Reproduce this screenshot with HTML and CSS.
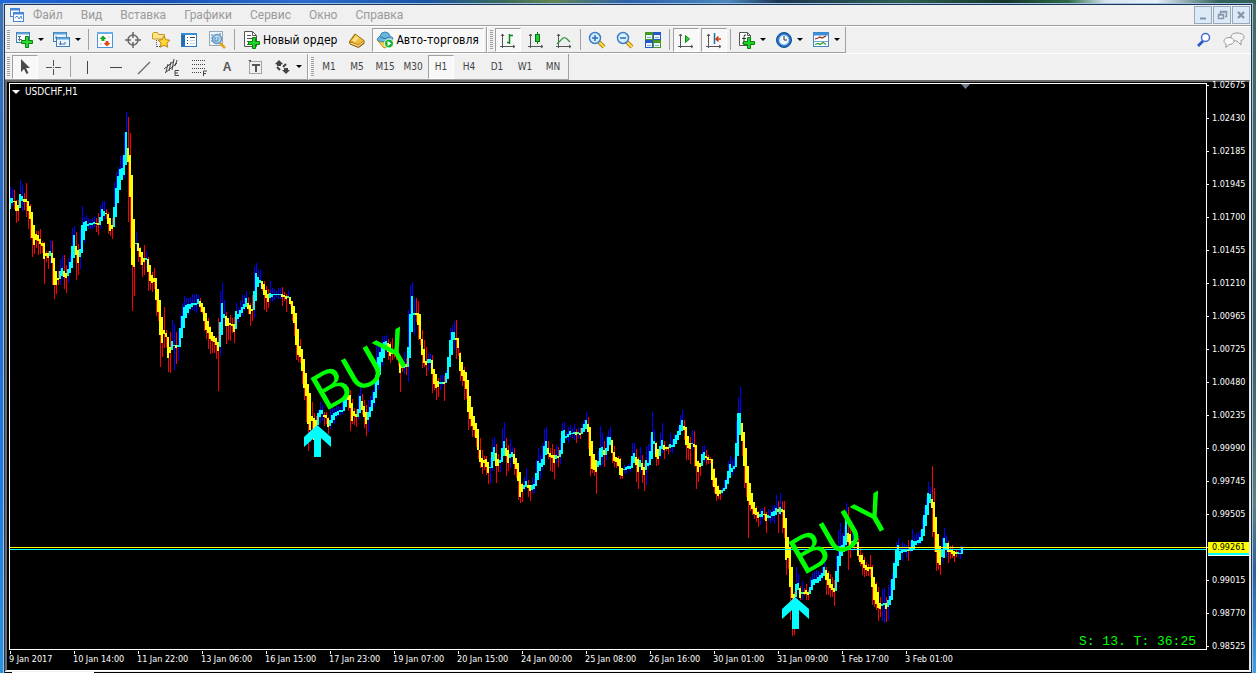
FILE: index.html
```html
<!DOCTYPE html>
<html lang="ru">
<head>
<meta charset="utf-8">
<title>USDCHF,H1</title>
<link rel="stylesheet" href="styles.css">
</head>
<body>
<div class="window">
  <header class="menubar">
    <svg class="app-icon" width="16" height="16" viewBox="0 0 16 16"><g fill="#fff" stroke="#4a86d8"><rect x="1.500" y="1.500" width="9" height="8"/><rect x="4.500" y="5.500" width="10" height="9"/></g><path d="M1 2.500h10M4 6.500h11" stroke="#4a86d8" stroke-width="2"/><path d="M6 11l2-2 2 3 2-3 1 3" fill="none" stroke="#4a86d8"/></svg>
    <nav class="menu">
      <button>Файл</button><button>Вид</button><button>Вставка</button><button>Графики</button><button>Сервис</button><button>Окно</button><button>Справка</button>
    </nav>
    <div class="controls">
      <button aria-label="Свернуть"><svg width="16" height="16"><path d="M5 11.500h6" stroke="#7f93a8" stroke-width="2"/></svg></button>
      <button aria-label="Восстановить"><svg width="16" height="16"><path d="M6.500 7V4.500h6v5H11M6 5h7M4.500 7.500h5v4h-5zM4 8h6" fill="none" stroke="#8698aa" stroke-width="1.500"/></svg></button>
      <button aria-label="Закрыть"><svg width="16" height="16"><path d="M5 5l6 6M11 5l-6 6" stroke="#8295a8" stroke-width="2.200"/></svg></button>
    </div>
  </header>

  <div class="row">
    <div class="group">
      <span class="grip"></span>
      <button class="drop" aria-label="Новый график"><svg width="18" height="18"><rect x=".5" y="1.500" width="13" height="10" fill="#fff" stroke="#3f7fb5"/><path d="M1 2.500h12" stroke="#5fa4dc" stroke-width="2"/><path d="M3.500 5v5M2 8.500h4M2 5.500h3" stroke="#56738f"/><path d="M9.500 5.500h3v4h4v3h-4v4h-3v-4h-4v-3h4z" fill="#2bd934" stroke="#06830d"/></svg><i class="caret"></i></button>
      <button class="drop" aria-label="Профили"><svg width="18" height="18"><rect x=".5" y="1.500" width="13" height="9" fill="#e8f3fc" stroke="#3f7fb5"/><path d="M1 2.500h12" stroke="#5fa4dc" stroke-width="2"/><rect x="3.500" y="6.500" width="13" height="9" fill="#e8f3fc" stroke="#3f7fb5"/><path d="M4 7.500h12" stroke="#5fa4dc" stroke-width="2"/><path d="M3 5v3M6 13h6M7.500 10v4M12 11v2" stroke="#56738f"/></svg><i class="caret"></i></button>
      <span class="sep"></span>
      <button class="tool" aria-label="Обзор рынка"><svg width="18" height="18"><rect x="1.500" y="1.500" width="15" height="15" fill="#fff" stroke="#4d94d6"/><path d="M1 2h16" stroke="#69aee8" stroke-width="2"/><path d="M3.500 8L7 4.500 10.500 8H8.500v2h-3V8z" fill="#17a81f"/><path d="M7.500 12h2v-2h3v2h2L11 15.500z" fill="#dd4a17"/><path d="M4 13h2M12 6h2" stroke="#bbb"/></svg></button>
      <button class="tool" aria-label="Окно данных"><svg width="18" height="18"><circle cx="9" cy="9" r="5" fill="none" stroke="#666" stroke-width="1.500"/><path d="M9 1v6M9 11v6M1 9h6M11 9h6" stroke="#666" stroke-width="1.500"/></svg></button>
      <button class="tool" aria-label="Навигатор"><svg width="18" height="18"><path d="M.5 8V2.500l1-1h4l1 2h6V8z" fill="#ffe384" stroke="#c59a24"/><path d="M4.500 9v7M5 15.500h4" stroke="#555" stroke-dasharray="1 1"/><path d="M12 5l1.900 3.700 4 .5-3 2.900.8 4.100L12 14.300l-3.700 1.900.8-4.100-3-2.900 4-.5z" fill="#ffd735" stroke="#b98510"/></svg></button>
      <button class="tool" aria-label="Терминал"><svg width="18" height="18"><rect x="1.500" y="2.500" width="15" height="13" fill="#fff" stroke="#2f78bd"/><path d="M1 3h16" stroke="#3c8ad0" stroke-width="2"/><path d="M3.500 4v11" stroke="#246bb2" stroke-width="3"/><path d="M7 6.500h1M10 6.500h5M7 9.500h1M7 12.500h1" stroke="#345"/><path d="M10 9.500h5M10 12.500h5" stroke="#c4d6e8"/></svg></button>
      <button class="tool" aria-label="Тестер стратегий"><svg width="18" height="18"><rect x="1.500" y=".5" width="13" height="14" fill="#eef4f8" stroke="#98a8b3"/><path d="M4 3v9M12 2v5" stroke="#52799e" stroke-dasharray="2 1"/><circle cx="9" cy="8" r="4.500" fill="#b5daf2" stroke="#5e96c6" stroke-width="1.500"/><path d="M7 6v4h3V6" fill="none" stroke="#5487b5"/><path d="M12 12l5 5" stroke="#e0a522" stroke-width="2.500"/></svg></button>
      <span class="sep"></span>
      <button class="wide"><svg width="18" height="18"><path d="M1.500.5h8l4 4v11h-12z" fill="#fff" stroke="#555"/><path d="M9.500.5v4h4M4 4.500h4M4 7.500h7M4 10.500h4M4 13.500h2" fill="none" stroke="#555"/><path d="M9.500 6.500h3v4h4v3h-4v4h-3v-4h-4v-3h4z" fill="#1fd326" stroke="#07850c"/></svg>Новый ордер</button>
      <button class="tool" aria-label="Редактор"><svg width="18" height="18"><path d="M1.500 10.500L7 3l9 6.500v3L10.500 16.500 2 13z" fill="#c4820c" stroke="#8b5a08"/><path d="M2.500 10L7.500 3.500l8 6-5 4z" fill="#efbd3c"/><path d="M4 9.500l4-4.500 3 2-4 4.500z" fill="#fbe08a"/><path d="M2.500 12l8 3L15.500 11" fill="none" stroke="#fff1c0"/></svg></button>
      <button class="wide pressed"><svg width="18" height="18"><path d="M1 9l7 8 7-2 1-6z" fill="#f4cf4d" stroke="#c6981e"/><path d="M4 5q1-4 5-4t5 4l3 2q-1 4-8 4T1 8z" fill="#69b5dc" stroke="#3a86b2"/><path d="M4 6q5 3 10 0" fill="none" stroke="#2c79a8"/><circle cx="13" cy="12.500" r="4.500" fill="#14b32a" stroke="#fff"/><path d="M11.500 10v5l4-2.500z" fill="#fff"/></svg>Авто-торговля</button>
    </div>
    <div class="group second">
      <span class="grip"></span>
      <button class="tool pressed" aria-label="Бары"><svg width="18" height="18"><path d="M3.500 3v14M1 15.500h15M2 5l1.500-2L5 5M14 14l2 1.500-2 1.500" fill="none" stroke="#555"/><path d="M10.500 3v10M8 11.500h2.500M11 4.500h3" stroke="#0a8a19" stroke-width="1.500"/></svg></button>
      <button class="tool" aria-label="Свечи"><svg width="18" height="18"><path d="M3.500 3v14M1 15.500h15M2 5l1.500-2L5 5M14 14l2 1.500-2 1.500" fill="none" stroke="#555"/><path d="M10.500 1v12" stroke="#087810"/><rect x="8.500" y="3.500" width="4" height="7" fill="#21ce35" stroke="#087810"/></svg></button>
      <button class="tool" aria-label="Линия"><svg width="18" height="18"><path d="M3.500 3v14M1 15.500h15M2 5l1.500-2L5 5M14 14l2 1.500-2 1.500" fill="none" stroke="#555"/><path d="M2 13l6-6q2-1 4 1l3 3" fill="none" stroke="#2e9b3b" stroke-width="1.300"/></svg></button>
      <span class="sep"></span>
      <button class="tool" aria-label="Увеличить"><svg width="18" height="18"><path d="M11 11l5 5" stroke="#b8860b" stroke-width="4"/><path d="M11 11l5 5" stroke="#ffdc55" stroke-width="2"/><circle cx="7" cy="7" r="5.500" fill="#d7efff" stroke="#3d7fc4" stroke-width="1.500"/><path d="M4 7h6M7 4v6" stroke="#276fb8" stroke-width="1.500"/></svg></button>
      <button class="tool" aria-label="Уменьшить"><svg width="18" height="18"><path d="M11 11l5 5" stroke="#b8860b" stroke-width="4"/><path d="M11 11l5 5" stroke="#ffdc55" stroke-width="2"/><circle cx="7" cy="7" r="5.500" fill="#d7efff" stroke="#3d7fc4" stroke-width="1.500"/><path d="M4 7h6" stroke="#276fb8" stroke-width="1.500"/></svg></button>
      <button class="tool" aria-label="Окна плиткой"><svg width="18" height="18"><path d="M1 1h8v8H1zM9 9h8v8H9z" fill="#46991e"/><path d="M9 1h8v8H9zM1 9h8v8H1z" fill="#2459c8"/><path d="M2 4h6v4H2zM10 4h6v4h-6zM2 12h6v4H2zM10 12h6v4h-6z" fill="#eef5ff"/><path d="M3 6.500h4M11 6.500h4M3 14.500h4M11 14.500h4" stroke="#84a8cf"/></svg></button>
      <span class="sep"></span>
      <button class="tool pressed" aria-label="Автопрокрутка"><svg width="18" height="18"><path d="M3.500 3v14M1 15.500h15M2 5l1.500-2L5 5M14 14l2 1.500-2 1.500" fill="none" stroke="#555"/><path d="M8.500 4.500v7l4-3.500z" fill="#2ccf40" stroke="#0b8a18"/></svg></button>
      <button class="tool pressed" aria-label="Сдвиг графика"><svg width="18" height="18"><path d="M3.500 3v14M1 15.500h15M2 5l1.500-2L5 5M14 14l2 1.500-2 1.500" fill="none" stroke="#555"/><path d="M9.500 2v11" stroke="#1f6fa8" stroke-width="1.500"/><path d="M11 8h5M13.500 5.500L11 8l2.500 2.500" fill="none" stroke="#c9400d" stroke-width="1.500"/></svg></button>
      <span class="sep"></span>
      <button class="drop" aria-label="Индикаторы"><svg width="18" height="18"><path d="M1.500 1.500h8l3 3v10h-11z" fill="#fff" stroke="#555"/><path d="M9.500 1.500v3h3" fill="none" stroke="#555"/><path d="M8 4q-2-1-2 2v5q0 2-2 1M4 7.500h4" fill="none" stroke="#333"/><path d="M9.500 6.500h3v4h4v3h-4v4h-3v-4h-4v-3h4z" fill="#1fd326" stroke="#07850c"/></svg><i class="caret"></i></button>
      <button class="drop" aria-label="Периоды"><svg width="18" height="18"><circle cx="9" cy="9" r="7.500" fill="#1d6fc4" stroke="#0c4e99"/><circle cx="9" cy="9" r="5" fill="#f3f8fc" stroke="#84bdee"/><path d="M9 5v4h3" fill="none" stroke="#333"/></svg><i class="caret"></i></button>
      <button class="drop" aria-label="Шаблоны"><svg width="18" height="18"><rect x="1.500" y="1.500" width="15" height="14" fill="#fff" stroke="#3f86c8"/><path d="M1 3h16" stroke="#3f8fd8" stroke-width="3"/><path d="M2 10.500h14" stroke="#79a9d3"/><path d="M3 8l3-1 2-1 2 1 4-2" fill="none" stroke="#932c13" stroke-width="1.300"/><path d="M3 13.500l3-1 2 1 3-2 3 2" fill="none" stroke="#279b31" stroke-width="1.300"/></svg><i class="caret"></i></button>
    </div>
    <div class="right">
      <button class="tool" aria-label="Поиск"><svg width="18" height="18"><path d="M8 10l-5 5" stroke="#2c58c8" stroke-width="2.800"/><circle cx="10.500" cy="6.500" r="4" fill="#fff" stroke="#3f6bd8" stroke-width="1.500"/></svg></button>
      <button class="chat" aria-label="Чат"><svg width="22" height="18"><path d="M14 2c4 0 7 1.500 7 4 0 2-1 3-3 3.500V14l-4-4c-4 0-6-1.500-6-4s2-4 6-4z" fill="#f4f4f6" stroke="#999"/><path d="M6 6.500c3 0 5 1.500 5 3.500s-2 3.500-5 3.500l-3 3v-3.500C1.500 12.500 1 11 1 10c0-2 2-3.500 5-3.500z" fill="#fafafc" stroke="#999"/></svg></button>
    </div>
  </div>

  <div class="row">
    <div class="group">
      <span class="grip"></span>
      <button class="tool pressed" aria-label="Курсор"><svg width="18" height="18"><path d="M5 1v13l3-3 2.500 5 2-1L10 10h4z" fill="#4a4a4a"/></svg></button>
      <button class="tool" aria-label="Перекрестие"><svg width="18" height="18"><path d="M9.500 2v6M9.500 11v6M2 9.500h6M11 9.500h6M9 9.500h1" stroke="#4f4f4f"/></svg></button>
      <span class="sep"></span>
      <button class="tool" aria-label="Вертикальная линия"><svg width="18" height="18"><path d="M9.500 3v13" stroke="#444"/></svg></button>
      <button class="tool" aria-label="Горизонтальная линия"><svg width="18" height="18"><path d="M4 9.500h12" stroke="#444"/></svg></button>
      <button class="tool" aria-label="Трендовая линия"><svg width="18" height="18"><path d="M4 16L16 4" stroke="#666" stroke-width="1.200"/></svg></button>
      <button class="tool" aria-label="Канал"><svg width="18" height="18"><path d="M2 11L12 3M3 15L15 5M6 6l-2 8M9 4l-2 9M12 1l-2 11M15 2l-2 6" stroke="#444"/><path d="M17 12.500h-4v5h4M13 15h3" fill="none" stroke="#444"/></svg></button>
      <button class="tool" aria-label="Фибоначчи"><svg width="18" height="18"><path d="M2 2.500h14M2 6.500h14M2 10.500h14M2 14.500h9" stroke="#444" stroke-dasharray="1 1"/><path d="M13.500 18v-5H17M13 15.500h3" fill="none" stroke="#444"/></svg></button>
      <button class="tool letter">A</button>
      <button class="tool" aria-label="Текстовая метка"><svg width="18" height="18"><rect x="3.500" y="3.500" width="12" height="12" fill="none" stroke="#555" stroke-dasharray="1 1"/><path d="M6 7h8M10 6v8" stroke="#555" stroke-width="2"/><path d="M2 2h3v2z" fill="#444"/></svg></button>
      <button class="drop" aria-label="Стрелки"><svg width="18" height="18"><path d="M5 2l4 4-2 .5V8H3V6.500L1 6z" fill="#444"/><path d="M12 16l-4-4h2v-2h4v2h2z" fill="#444"/><path d="M3 9l3 3M9 9l3-3" stroke="#444" stroke-width="2"/></svg><i class="caret"></i></button>
    </div>
    <div class="group frames">
      <span class="grip"></span>
      <button class="tool">M1</button><button class="tool">M5</button><button class="tool">M15</button><button class="tool">M30</button><button class="tool pressed">H1</button><button class="tool">H4</button><button class="tool">D1</button><button class="tool">W1</button><button class="tool">MN</button>
    </div>
  </div>

  <main class="chart">
    <section class="plot">
      <svg class="canvas" id="canvas" width="100%" height="100%" role="img" aria-label="USDCHF, H1"></svg>
      <div class="symbol"><i class="caret"></i>USDCHF,H1</div>
      <div class="timer">S: 13. T: 36:25</div>
    </section>
    <ol class="prices">
      <li>1.02675</li><li>1.02430</li><li>1.02185</li><li>1.01945</li><li>1.01700</li><li>1.01455</li><li>1.01210</li><li>1.00965</li><li>1.00725</li><li>1.00480</li><li>1.00235</li><li>0.99990</li><li>0.99745</li><li>0.99505</li><li class="current"><b>0.99261</b></li><li>0.99015</li><li>0.98770</li><li>0.98525</li>
    </ol>
    <ol class="dates">
      <li>9 Jan 2017</li><li>10 Jan 14:00</li><li>11 Jan 22:00</li><li>13 Jan 06:00</li><li>16 Jan 15:00</li><li>17 Jan 23:00</li><li>19 Jan 07:00</li><li>20 Jan 15:00</li><li>24 Jan 00:00</li><li>25 Jan 08:00</li><li>26 Jan 16:00</li><li>30 Jan 01:00</li><li>31 Jan 09:00</li><li>1 Feb 17:00</li><li>3 Feb 01:00</li>
    </ol>
  </main>
  <footer class="tabs"><span></span></footer>
</div>
<script src="chart.js"></script>
</body>
</html>
```

FILE: styles.css
```css
* { box-sizing: border-box; }
body {
  margin: 0;
  height: 100vh;
  padding: 4px 4px 0 4px;
  overflow: hidden;
  font-family: "DejaVu Sans Condensed", "Noto Sans", sans-serif;
  background:
    linear-gradient(90deg, #2368d8 0, #164fb5 12%, #2c6ccf 24%, #1a55a4 34%, #3b6a58 40%, #62864f 44%, #2b62ac 50%, #4a87bd 58%, #1c3550 62%, #2e5f50 72%, #15352b 80%, #2c6a44 85%, #d5e4ec 88%, #e9f1fa 92%, #35615c 97%) top / 100% 4px no-repeat,
    linear-gradient(180deg, #3f72b0 0, #2368cf 40%, #1c7fe0 75%, #2a93dd) left / 5px 100% no-repeat,
    linear-gradient(180deg, #4b6b66 0, #3c5d5c 50%, #5f827c 75%, #2f5f9c 85%, #39a2ec) right / 5px 100% no-repeat,
    #1a3458;
}
button { border: 0; background: none; padding: 0; margin: 0; font: inherit; color: inherit; }
svg { display: block; flex: none; }
ol { list-style: none; margin: 0; padding: 0; }

.window {
  height: 100%;
  display: flex;
  flex-direction: column;
  background: #f0f0f0;
  border: 1px solid #1b3557;
  border-bottom: 0;
  outline: 1px solid #9fc0e0;
}
.menubar {
  display: flex;
  align-items: center;
  height: 21px;
  flex: none;
  padding: 0 1px 0 4px;
  border-bottom: 1px solid #a0a0a0;
}
.menu { display: flex; gap: 18px; margin-left: 8px; font: 12px/16px Roboto, "Noto Sans", sans-serif; color: #9a9a9a; }
.controls { display: flex; gap: 1px; margin-left: auto; }
.controls button { width: 18px; height: 18px; border: 1px solid #98a9bc; background: #dce9f6; }

.row { display: flex; height: 27px; flex: none; border-top: 1px solid #fff; }
.group {
  display: flex;
  align-items: center;
  border-right: 1px solid #a0a0a0;
  border-bottom: 1px solid #a0a0a0;
  padding-right: 1px;
}
.second, .frames { border-left: 1px solid #fff; }
.grip {
  width: 3px;
  height: 20px;
  margin: 0 1px 0 2px;
  background: repeating-linear-gradient(180deg, #a0a0a0 0 1px, #f0f0f0 1px 2px);
}
.sep { width: 1px; height: 21px; margin: 0 2px 0 3px; background: #a0a0a0; }
.second .sep { margin-left: 2px; }
.tool, .drop, .wide, .chat { display: flex; align-items: center; height: 24px; flex: none; }
.tool { width: 28px; justify-content: center; }
.tool.pressed { width: 26px; margin: 0 1px; }
.drop { width: 37px; padding-left: 5px; gap: 4px; }
.wide { gap: 2px; padding: 0 6px; font: 12px/16px "DejaVu Sans Condensed", sans-serif; color: #000; }
.wide.pressed { padding: 0 4px 0 3px; margin: 0 1px; }
.pressed {
  background: #f8f8f8;
  border: 1px solid #a0a0a0;
  border-right-color: #fff;
  border-bottom-color: #fff;
}
.caret { border: 3px solid transparent; border-top-color: #000; border-bottom: 0; }
.right { display: flex; align-items: center; margin-left: auto; padding-right: 6px; gap: 5px; }
.letter { font: bold 12px/16px "Liberation Sans", sans-serif; color: #555; }
.frames { font-size: 10px; color: #444; }

.chart {
  flex: 1;
  min-height: 0;
  margin-right: 1px;
  display: grid;
  grid-template-columns: 1fr 42px;
  grid-template-rows: 1fr 20px;
  background: #000;
  color: #fff;
  border: 2px solid #696969;
  border-right: 1px solid #e3e3e3;
  border-bottom: 1px solid #fff;
  padding: 1px 0 0 2px;
  font-size: 9px;
  line-height: 11px;
}
.plot { position: relative; min-width: 0; min-height: 0; border: 1px solid #fff; }
.canvas { position: absolute; inset: 0; }
.symbol { position: absolute; left: 2px; top: 2px; display: flex; align-items: center; gap: 5px; font-size: 10px; }
.symbol .caret { border-width: 4px; border-bottom: 0; border-top-color: #fff; }
.timer { position: absolute; right: 10px; bottom: 0; font: 13px/15px "Liberation Mono", monospace; color: #0f0; }
.prices { min-height: 0; margin-top: -3px; }
.prices li { display: flex; align-items: center; gap: 3px; height: 11px; margin-bottom: 22px; }
.prices li::before { content: ""; width: 2px; height: 1px; background: #fff; }
.prices .current { gap: 0; }
.prices .current::before { width: 1px; }
.prices b { flex: 1; padding-left: 4px; font-weight: normal; background: #ff0; color: #000; box-shadow: 0 2px #0ff, 0 3px #fff; }
.dates { grid-column: 1 / -1; display: flex; }
.dates li { width: 64px; flex: none; padding-top: 1px; white-space: nowrap; }
.dates li::before { content: ""; display: block; width: 1px; height: 3px; margin-left: 1px; background: #fff; }
.tabs { flex: none; height: 2px; background: #000; border-top: 1px solid #f0f0f0; padding-left: 7px; }
.tabs span { display: block; width: 82px; height: 1px; background: #fff; }
```

FILE: chart.js
```js
// Each row: x of its first candle, then candles two pixels apart.
// u = rising, d = falling; values: high, body top, body bottom, low.
const rows = [
  [10, "u187,198,209,209 u189,198,203,206 d190,201,202,209 d200,201,211,223 d200,205,211,221 u180,194,208,208 u185,196,201,211 d193,199,202,210 d183,199,202,217 d201,201,211,229 d204,206,219,239 d212,212,238,257 d225,225,245,254 d231,234,240,248 d231,235,241,255"],
  [40, "d229,239,244,254 d241,243,246,253 d242,243,259,284 d251,253,256,262 d251,253,258,269 u240,251,256,264 d241,253,263,285 d258,258,285,299 d271,271,285,294 d271,278,280,285 u259,271,279,285 u255,268,276,279 d255,271,277,289 d265,273,278,293 u258,269,276,283"],
  [70, "u255,262,273,273 u228,246,268,268 u226,235,258,258 d232,246,255,280 d244,250,263,275 u230,249,257,269 u206,225,253,253 u217,222,240,243 u215,221,231,231 u219,224,226,229 u219,223,225,229 u218,223,225,229 u216,222,224,227 d218,223,224,232 d213,223,225,235"],
  [100, "u205,217,225,229 u201,209,221,221 u201,211,216,219 d209,213,214,219 d212,214,224,234 d218,218,231,236 d218,225,229,239 u182,207,227,227 u172,188,217,217 u167,176,203,203 u156,169,190,190 u156,168,180,180 u133,155,175,178 u112,132,165,165 d117,148,162,222"],
  [130, "d133,155,197,248 d175,175,265,311 d219,219,267,296 u232,243,244,251 d243,243,251,262 d247,248,257,265 d252,252,265,277 d245,258,262,275 u251,258,260,270 d257,259,272,291 d265,265,281,290 d272,275,283,292 d268,278,282,289 d278,278,300,316 d289,289,312,321"],
  [160, "d300,300,335,367 d317,317,343,357 d307,330,334,348 d330,333,337,347 d337,337,358,372 d332,347,353,373 u320,341,350,350 u324,345,346,370 d332,345,348,364 u330,345,347,361 u315,328,347,347 u303,316,338,338 u296,307,328,328 u298,305,318,318 u298,304,313,315"],
  [190, "u297,304,309,311 u294,303,307,310 u295,303,305,311 u294,303,305,313 u295,299,304,306 d298,301,307,312 d303,303,312,314 d307,307,321,331 d313,313,330,339 d318,321,333,349 d326,327,339,354 d332,332,341,353 d336,336,342,353 d337,338,345,359 d318,342,351,391"],
  [220, "u291,322,347,356 u283,303,335,335 u300,314,318,326 d312,316,326,344 d318,318,326,340 d315,323,325,341 d318,324,326,333 d317,324,332,343 u303,311,329,329 u308,314,319,322 u301,310,317,317 u295,307,313,316 u295,304,309,311 u291,298,307,307 d297,303,309,314"],
  [250, "d303,305,314,326 d295,309,311,321 u266,291,310,318 u263,273,301,301 u270,277,287,287 u270,280,283,289 d281,281,289,291 d281,284,295,310 d286,290,298,312 d289,294,302,308 u281,293,298,302 u288,294,297,302 u289,294,295,300 u291,294,295,298 u288,294,295,299"],
  [280, "u288,294,295,299 d287,294,297,306 d292,295,297,301 d294,296,299,312 u290,296,298,298 d297,297,304,306 d301,301,314,321 d306,306,323,336 d313,313,345,360 d329,329,355,362 d339,346,357,363 d349,349,371,384 d359,359,388,400 d373,373,396,422 d384,384,424,451"],
  [310, "d393,393,430,442 d402,416,421,435 d413,418,440,445 d416,420,432,440 u410,413,425,430 u402,410,417,423 u405,410,414,420 d412,415,417,426 d412,415,418,424 d417,418,427,434 u408,420,426,429 u405,415,423,423 u408,413,420,424 u406,412,416,418 u406,411,415,416"],
  [340, "u407,410,412,415 u402,410,412,414 u395,398,411,411 u384,391,407,407 d387,393,400,411 d390,395,408,431 d399,403,421,424 d408,411,416,425 d409,414,417,427 u394,409,417,420 u387,396,413,413 d394,401,410,415 d400,406,417,428 d405,412,424,436 u400,412,420,432"],
  [370, "u396,407,417,417 u390,400,411,411 u380,392,403,407 u346,375,398,398 u346,357,385,390 u342,352,375,375 u336,345,362,366 u336,342,358,358 u335,341,350,354 d339,343,352,360 d342,344,356,363 d338,351,354,360 d348,352,354,358 d349,353,356,360 d350,354,359,366"],
  [400, "d355,356,373,392 d359,360,368,372 u352,364,368,374 d358,364,367,375 u310,347,367,382 u285,314,358,358 u282,296,332,332 u298,313,315,335 d298,313,315,322 d301,313,325,340 d314,314,339,345 d330,339,355,368 d340,349,363,367 d347,361,365,376 u353,359,363,371"],
  [430, "u354,359,363,368 d355,360,374,393 d369,369,384,390 d374,374,388,400 d378,381,387,397 u375,382,384,390 u375,382,384,386 d376,382,384,401 u370,373,383,383 u357,357,379,379 u328,340,367,367 u325,332,355,355 u321,332,340,350 d320,338,340,359 d338,338,348,356"],
  [460, "d352,353,371,381 d362,362,376,386 d367,370,381,400 d372,372,389,399 d380,380,412,430 d396,396,419,427 d407,407,426,437 d416,416,430,437 d423,423,438,447 d429,429,450,459 d438,450,462,468 d450,458,467,474 d456,460,463,470 d456,459,467,475 d462,462,473,484"],
  [490, "u458,467,468,483 u439,452,468,471 u437,447,461,461 d444,453,466,483 d454,459,466,472 u457,460,463,472 u428,448,462,462 u422,441,456,456 d438,448,456,476 d445,450,463,471 u439,454,458,468 u447,452,457,463 d448,454,464,475 d458,458,469,478 d463,463,481,500"],
  [520, "d472,472,497,503 d483,484,492,502 u477,485,489,491 u468,481,487,487 d480,485,488,497 d485,485,491,501 u477,485,490,493 u479,484,489,493 u460,473,486,486 u448,461,480,480 u454,463,471,479 u444,459,467,470 u429,446,465,465 u427,441,455,455 d441,448,454,459"],
  [550, "d448,453,457,471 d444,455,458,472 d449,455,463,479 u445,455,459,463 d447,456,458,467 u438,450,457,464 u423,431,454,454 u422,430,443,443 u432,436,438,440 u427,434,437,443 u425,431,435,437 u428,433,434,439 u424,432,434,440 d429,432,435,443 u427,432,434,439 d428,433,435,439"],
  [582, "u422,428,434,434 u420,424,432,432 u412,420,429,433 d417,424,432,449 d427,427,456,476 d442,441,469,473 d454,454,470,476 d460,460,472,494 u451,461,467,467 u426,448,465,467 u433,447,457,465 d441,450,455,467 u436,448,455,460 u430,437,451,451 u427,437,445,447 d440,440,453,463"],
  [614, "d446,452,461,467 d457,457,462,468 d456,458,466,467 d458,459,475,479 d468,468,476,479 u465,469,470,474 u466,467,470,474 u464,466,469,470 u462,466,469,472 u443,456,468,468 u443,453,463,463 d449,457,465,482 d457,459,472,489 u447,460,467,473 d455,463,470,483 d463,467,475,491"],
  [646, "u446,460,470,485 u444,463,466,468 u437,451,465,465 u412,432,459,459 u430,441,444,454 d442,443,457,466 d449,449,459,465 u433,446,456,458 u423,440,449,453 d441,445,450,459 d446,447,449,451 d445,447,449,454 u433,444,448,452 u440,445,447,453 u434,439,447,447 u434,435,444,444"],
  [678, "u427,431,440,440 u415,425,435,435 u410,420,431,431 d420,426,430,440 d427,427,445,460 d436,436,448,460 d437,443,449,464 u430,443,444,450 d431,444,447,467 d445,445,466,489 d460,461,472,482 d463,463,467,476 u446,454,466,466 u445,452,460,462 d450,456,458,465"],
  [708, "d455,457,460,464 d457,459,460,463 d459,459,480,486 d468,469,487,493 d477,478,494,501 d485,486,496,499 d490,490,494,500 u487,490,493,495 u480,488,491,491 u477,480,489,489 u461,471,484,484 u456,464,478,478 u460,468,472,475 u457,466,469,471 u421,443,467,467 u397,413,456,456 u387,413,435,435"],
  [742, "d423,423,441,456 d432,432,466,488 d448,448,483,497 d466,466,501,538 d483,483,505,511 d493,493,509,515 d502,502,514,519 d506,508,515,522 d511,512,518,527 u509,514,517,525 u508,511,517,519 d507,514,515,520 d512,514,521,533 u509,515,518,521 u510,516,518,523 u505,512,516,521 u505,511,516,524"],
  [776, "u495,508,515,515 d501,509,512,533 u493,507,514,516 d501,509,512,533 d501,510,528,538 d518,518,560,575 d537,537,558,569 d548,548,587,620 d567,567,598,636 d592,594,606,635 u567,584,597,605 u574,583,590,594 d586,588,598,600 u581,592,594,600 d588,592,594,595"],
  [806, "d584,590,594,600 d590,592,595,600 u577,587,594,594 u573,580,590,590 u571,579,585,585 u570,579,583,583 u571,577,583,583 u572,575,581,581 u567,573,578,580 u562,567,576,576 d567,570,580,595 d571,573,585,595 d574,579,588,597 d577,584,590,597 d580,588,592,606"],
  [836, "u555,571,591,591 u530,556,582,582 u523,546,566,566 u533,545,556,556 u526,536,552,552 u503,515,545,549 d507,533,542,570 d523,534,547,558 u529,541,543,551 d532,540,544,550 u530,541,544,550 d538,542,556,560 d547,555,562,566 d553,555,564,575 d557,560,568,577 d562,565,570,576"],
  [868, "d564,567,571,576 d555,567,569,577 d565,567,587,605 d577,577,600,607 d582,584,604,610 d587,592,608,621 d597,603,609,617 u589,604,606,621 u588,603,605,623 d597,603,609,622 u585,600,607,620 u580,596,605,605 u573,579,600,600 u561,563,590,590 u542,550,578,578 u538,545,566,566 u548,551,560,560"],
  [902, "u542,549,553,561 u544,549,552,553 u545,549,552,558 d540,549,551,561 u541,548,551,553 u529,540,551,551 u535,541,549,549 u533,541,545,545 u532,540,543,545 u530,537,543,544 u518,529,541,541 u507,515,536,536 u498,505,526,526 u482,493,515,515 u487,494,503,507 d466,499,508,537"],
  [934, "d488,502,532,552 d517,517,552,571 d534,534,563,570 d546,546,565,575 u537,550,557,563 u528,538,558,558 u535,543,549,557 d541,543,552,563 d546,549,552,559 d545,550,554,558 d551,551,556,562 d550,552,554,557 u549,552,554,557 u546,553,554,559 u546,547,554,554"]
];

// Page position that the plot's inner top-left corner stands for in the data.
const left = 10;
const top0 = 84;
const part = (x, y, w, h, fill) =>
  `<rect x="${x - left}" y="${y - top0}" width="${w}" height="${Math.max(1, h)}" fill="${fill}"/>`;

let wicks = "";
let bodies = "";
for (const [start, text] of rows) {
  text.split(" ").forEach((item, i) => {
    const up = item[0] === "u";
    const [high, top, bottom, low] = item.slice(1).split(",").map(Number);
    const x = start + i * 2;
    wicks += part(x, high, 1, low - high, up ? "#00f" : "#f00");
    bodies += part(x - 1, top, 2, bottom - top, up ? "#0ff" : "#ff0");
  });
}

const signal = (x, y) =>
  `<polygon points="0,0 14,12 14,22 4,13 4,32 -3,32 -3,13 -13,22 -13,12" fill="#0ff" transform="translate(${x - left} ${y - top0})"/>`;
const label = (x, y) =>
  `<text transform="translate(${x - left} ${y - top0}) rotate(-30)" font-family="Liberation Sans, sans-serif" font-size="53" fill="#0f0">BUY</text>`;

document.getElementById("canvas").innerHTML =
  `<g shape-rendering="crispEdges">${wicks}${bodies}
  <rect y="463" width="100%" height="1" fill="#ff0"/><rect y="465" width="100%" height="1" fill="#0ff"/></g>
  ${signal(317, 425)}${signal(795, 597)}${label(325, 412)}${label(803, 576)}
  <path d="M951 0h9l-4.500 5z" fill="#708090"/>`;
```
